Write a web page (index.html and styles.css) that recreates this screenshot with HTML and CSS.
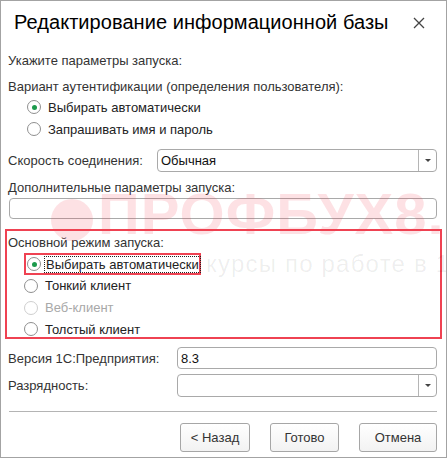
FILE: index.html
```html
<!DOCTYPE html>
<html lang="ru">
<head>
<meta charset="utf-8">
<link rel="stylesheet" href="styles.css">
</head>
<body>
<div class="window">
  <div class="titlebar">
    <div class="title">Редактирование информационной базы</div>
    <svg class="close" width="12" height="12" viewBox="0 0 12 12"><path d="M1 1L11 11M11 1L1 11" stroke="#444" stroke-width="1.3" fill="none"/></svg>
  </div>
  <div class="content">
    <div class="row text">Укажите параметры запуска:</div>
    <div class="row text gap1">Вариант аутентификации (определения пользователя):</div>
    <div class="radio r1"><span class="circle checked"></span><span>Выбирать автоматически</span></div>
    <div class="radio r2"><span class="circle"></span><span>Запрашивать имя и пароль</span></div>

    <div class="field speed">
      <span class="label">Скорость соединения:</span>
      <div class="combo"><span class="value">Обычная</span><span class="btn"><span class="arrow"></span></span></div>
    </div>

    <div class="row text extra-label">Дополнительные параметры запуска:</div>
    <div class="input wide"></div>

    <div class="mode-box">
      <div class="row text mode-label">Основной режим запуска:</div>
      <div class="radio hl"><span class="circle checked"></span><span class="focus">Выбирать автоматически</span></div>
      <div class="radio"><span class="circle"></span><span>Тонкий клиент</span></div>
      <div class="radio disabled"><span class="circle"></span><span>Веб-клиент</span></div>
      <div class="radio"><span class="circle"></span><span>Толстый клиент</span></div>
    </div>

    <div class="field version">
      <span class="label">Версия 1С:Предприятия:</span>
      <div class="input field-input"><span class="value">8.3</span></div>
    </div>
    <div class="field bits">
      <span class="label">Разрядность:</span>
      <div class="combo field-input"><span class="value"></span><span class="btn"><span class="arrow"></span></span></div>
    </div>

    <div class="divider"></div>

    <div class="buttons">
      <div class="button b-back">&lt; Назад</div>
      <div class="button b-done">Готово</div>
      <div class="button b-cancel">Отмена</div>
    </div>
  </div>

  <div class="watermark" aria-hidden="true">
    <span class="wm-logo"></span>
    <span class="wm-big">ПРОФБУХ8.ru</span>
    <span class="wm-small">курсы по работе в 1С</span>
  </div>
</div>
</body>
</html>
```
FILE: styles.css
```css
* { box-sizing: border-box; }
html, body { margin: 0; padding: 0; background: #fff; }
body {
  font-family: "Liberation Sans", Arial, sans-serif;
  font-size: 13px;
  color: #333;
}
.window {
  position: relative;
  width: 447px;
  height: 458px;
  border: 1px solid #a3a3a3;
  background: #fff;
  overflow: hidden;
}
.titlebar {
  height: 44px;
  display: flex;
  align-items: center;
  justify-content: space-between;
  padding: 0 21px 0 13px;
}
.title {
  font-size: 20px;
  color: #000;
  letter-spacing: 0.05px;
  margin-top: -2px;
}
.close { margin-top: -1px; }
.content {
  position: relative;
  z-index: 1;
  padding: 0 9px 0 7px;
  display: flex;
  flex-direction: column;
}
.row { height: 16px; line-height: 16px; }
.text { white-space: nowrap; }
.content > .row:first-child { margin-top: 8px; }
.gap1 { margin-top: 10px; }
.radio {
  display: flex;
  align-items: center;
  height: 22px;
  padding-left: 19px;
  white-space: nowrap;
  color: #222;
}
.r1 { margin-top: 1px; }
.circle {
  width: 14px;
  height: 14px;
  border: 1px solid #8f8f8f;
  border-radius: 50%;
  background: #fff;
  margin-right: 7px;
  flex: none;
  display: flex;
  align-items: center;
  justify-content: center;
}
.circle.checked::after {
  content: "";
  width: 5px;
  height: 5px;
  border-radius: 50%;
  background: #1c9a4c;
}
.radio.disabled { color: #a8a8a8; }
.radio.disabled .circle { border-color: #cfcfcf; }

.field {
  display: flex;
  align-items: center;
  height: 23px;
}
.label { width: 169px; flex: none; white-space: nowrap; }
.speed { margin-top: 9px; }
.speed .label { width: 149px; }
.combo, .input {
  position: relative;
  display: flex;
  align-items: center;
  height: 23px;
  border: 1px solid #a9a9a9;
  border-radius: 4px;
  background: #fff;
  flex: 1;
}
.combo .value, .input .value { flex: 1; padding-left: 3px; color: #111; }
.combo .btn {
  width: 18px;
  height: 100%;
  border-left: 1px solid #b5b5b5;
  display: flex;
  align-items: center;
  justify-content: center;
}
.arrow {
  width: 0; height: 0;
  border-left: 3px solid transparent;
  border-right: 3px solid transparent;
  border-top: 3px solid #444;
}
.extra-label { margin-top: 8px; }
.input.wide { flex: none; height: 21px; margin-top: 2px; margin-left: 1px; }

.mode-box {
  margin: 10px 0 0 -3px;
  width: 437px;
  border: 2px solid #ef4252;
  padding: 5px 0 0 1px;
  height: 110px;
}
.mode-box .radio { padding-left: 16px; height: 21.7px; }
.mode-box .mode-label { height: 14px; line-height: 14px; margin-bottom: 3px; }
.radio.hl {
  width: 177px;
  margin-left: 16px;
  padding-left: 1px;
  border: 2px solid #ef4252;
  height: 22px;
}
.radio.hl .circle { margin-right: 4px; }
.focus {
  outline: 1px dotted #222;
  outline-offset: 0px;
  padding: 0 1px;
  line-height: 15px;
}
.version { margin-top: 8px; height: 22px; }
.version .input { height: 22px; }
.bits { margin-top: 5px; }

.divider {
  height: 1px;
  background: #b4b4b4;
  margin: 14px 0 0 1px;
}
.buttons {
  display: flex;
  justify-content: flex-end;
  gap: 20px;
  margin-top: 11px;
}
.button {
  height: 29px;
  border: 1px solid #a6a6a6;
  border-radius: 3px;
  background: linear-gradient(#ffffff, #f2f2f2);
  display: flex;
  align-items: center;
  justify-content: center;
  color: #333;
}
.b-back { width: 70px; }
.b-done { width: 69px; }
.b-cancel { width: 78px; }

.watermark {
  position: absolute;
  left: 0;
  top: 0;
  width: 100%;
  height: 100%;
  z-index: 3;
  pointer-events: none;
}
.wm-logo {
  position: absolute;
  left: 50px;
  top: 198px;
  width: 42px;
  height: 42px;
  border-radius: 50%;
  background: rgba(240, 70, 90, 0.16);
}
.wm-big {
  position: absolute;
  left: 97px;
  top: 179px;
  font-size: 58px;
  font-weight: bold;
  color: rgba(240, 70, 90, 0.16);
  white-space: nowrap;
  letter-spacing: 1px;
}
.wm-small {
  position: absolute;
  left: 205px;
  top: 249px;
  font-size: 24px;
  color: rgba(0, 0, 0, 0.07);
  letter-spacing: 1.2px;
  white-space: nowrap;
}
```
